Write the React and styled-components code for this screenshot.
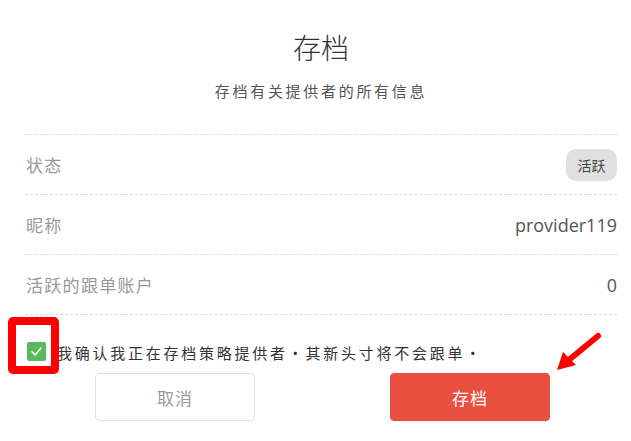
import React from "react";
import styled, { createGlobalStyle } from "styled-components";

const Global = createGlobalStyle`
  html, body { margin: 0; padding: 0; background: #fff; }
  body { font-family: "Open Sans", "Noto Sans CJK SC", sans-serif; }
`;

const Modal = styled.div`
  position: relative;
  width: 631px;
  height: 441px;
  box-sizing: border-box;
  padding: 30px 14px 0 25px;
  display: flex;
  flex-direction: column;
  overflow: hidden;
`;

const Title = styled.h1`
  margin: 0;
  text-align: center;
  font-size: 28px;
  line-height: 34px;
  font-weight: 300;
  color: #333;
  font-family: "Noto Sans CJK SC", sans-serif;
`;

const Subtitle = styled.p`
  margin: 15px 0 31px;
  text-align: center;
  font-size: 15px;
  line-height: 24px;
  letter-spacing: 2.7px;
  color: #555;
  font-family: "Noto Sans CJK SC", sans-serif;
`;

const List = styled.div`
  display: flex;
  flex-direction: column;
  border-bottom: 1px dashed #dcdcdc;
`;

const Row = styled.div`
  height: 59px;
  border-top: 1px dashed #dcdcdc;
  display: flex;
  align-items: center;
  justify-content: space-between;
`;

const Label = styled.span`
  font-size: 17px;
  color: #999;
  font-family: "Noto Sans CJK SC", sans-serif;
  letter-spacing: 1.3px;
  padding-left: 1px;
`;

const Value = styled.span`
  font-size: 18px;
  color: #555;
`;

const Badge = styled.span`
  display: inline-flex;
  align-items: center;
  justify-content: center;
  width: 51px;
  height: 32px;
  border-radius: 10px;
  background: #e0e0e0;
  color: #444;
  font-size: 14px;
  font-family: "Noto Sans CJK SC", sans-serif;
`;

const ConfirmRow = styled.label`
  margin-top: 24px;
  display: flex;
  align-items: center;
  gap: 11px;
  padding-left: 2px;
`;

const Check = styled.span`
  width: 19px;
  height: 19px;
  border-radius: 2px;
  background: #5cb85c;
  display: inline-flex;
  align-items: center;
  justify-content: center;
  flex: none;
`;

const ConfirmText = styled.span`
  font-size: 15px;
  line-height: 22px;
  letter-spacing: 2.75px;
  color: #333;
  font-family: "Noto Sans CJK SC", sans-serif;
  margin-top: 3px;
`;

const Buttons = styled.div`
  margin-top: 9px;
  display: flex;
  justify-content: center;
  gap: 135px;
  padding-left: 3px;
`;

const Button = styled.button`
  width: 160px;
  height: 48px;
  border-radius: 4px;
  border: 1px solid ${(p) => (p.$primary ? "#e9503f" : "#e2e2e2")};
  background: ${(p) => (p.$primary ? "#e9503f" : "#fff")};
  color: ${(p) => (p.$primary ? "#fff" : "#999")};
  font-size: 17px;
  font-family: "Noto Sans CJK SC", sans-serif;
  letter-spacing: 1px;
  cursor: pointer;
`;

const Highlight = styled.div`
  position: absolute;
  left: 8px;
  top: 317px;
  width: 51px;
  height: 57px;
  box-sizing: border-box;
  border: 8px solid #ff0000;
  border-radius: 5px;
  pointer-events: none;
`;

const Arrow = styled.svg`
  position: absolute;
  left: 550px;
  top: 328px;
  pointer-events: none;
`;

export default function App() {
  return (
    <>
      <Global />
      <Modal>
        <Title>存档</Title>
        <Subtitle>存档有关提供者的所有信息</Subtitle>
        <List>
          <Row>
            <Label>状态</Label>
            <Badge>活跃</Badge>
          </Row>
          <Row>
            <Label>昵称</Label>
            <Value>provider119</Value>
          </Row>
          <Row>
            <Label>活跃的跟单账户</Label>
            <Value>0</Value>
          </Row>
        </List>
        <ConfirmRow>
          <Check>
            <svg width="13" height="13" viewBox="0 0 13 13">
              <path d="M2 6.8 L5.2 10 L11 3" fill="none" stroke="#fff" strokeWidth="1.6" strokeLinecap="round" strokeLinejoin="round" />
            </svg>
          </Check>
          <ConfirmText>我确认我正在存档策略提供者・其新头寸将不会跟单・</ConfirmText>
        </ConfirmRow>
        <Buttons>
          <Button>取消</Button>
          <Button $primary>存档</Button>
        </Buttons>
        <Highlight />
        <Arrow width="60" height="50" viewBox="0 0 60 50">
          <line x1="48" y1="8" x2="20" y2="31" stroke="#f00" strokeWidth="6" strokeLinecap="round" />
          <polygon points="7,42 13,24 26,37" fill="#f00" />
        </Arrow>
      </Modal>
    </>
  );
}
